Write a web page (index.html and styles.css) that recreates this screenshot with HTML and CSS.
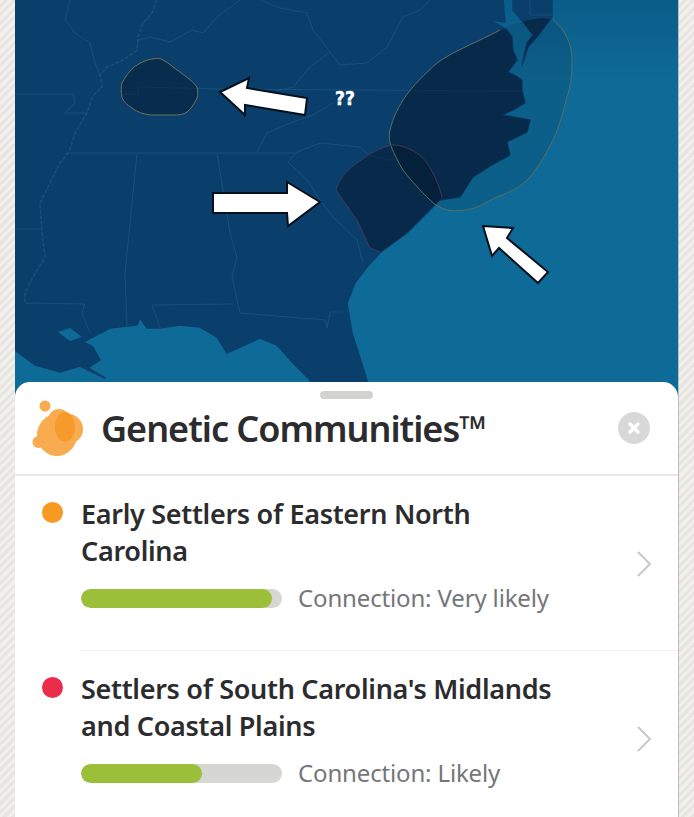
FILE: index.html
```html
<!DOCTYPE html>
<html lang="en">
<head>
<meta charset="utf-8">
<title>Genetic Communities</title>
<link rel="stylesheet" href="styles.css">
</head>
<body>
<main class="screen">
  <svg class="map" viewBox="15 0 663 400" aria-label="Map of the south-eastern United States">
    <defs>
      <linearGradient id="sea" x1="0" y1="0" x2="0" y2="1">
        <stop offset="0" stop-color="#0a5c88"/>
        <stop offset="0.2" stop-color="#0e6a97"/>
        <stop offset="1" stop-color="#0e6a97"/>
      </linearGradient>
      <clipPath id="landclip">
        <path d="M15,0 L503,0 L505,22 L490,20 L507,30 L512,37 L513,50 L517,60 L508,72 L516,76 L522,80 L522,90 L525,103 L513,110 L502,115 L530,120 L527,132 L507,142 L510,155 L490,166 L473,177 L460,197 L440,200 L420,220 L407,233 L380,253 L367,267 L355,283 L347,303 L352,333 L367,380 L367,400 L312,400 L310,380 L293,363 L277,345 L260,338 L227,353 L217,337 L200,327 L180,325 L160,328 L147,328 L140,318 L137,325 L110,328 L83,342 L93,347 L100,360 L88,368 L105,378 L80,366 L60,372 L35,365 L15,350 Z M513,0 L552,0 L552,17 L537,37 L528,47 L522,65 L527,43 L533,35 L523,22 L513,10 Z"/>
      </clipPath>
    </defs>
    <rect class="sea" x="15" y="0" width="663" height="400"/>
    <path class="blob-sea" d="M553,20 C566,30 572,45 572,60 C572,75 571,85 567,97 C562,115 560,125 553,140 C545,155 540,165 530,177 C520,188 510,192 497,197 C485,203 477,208 467,210 C458,211 452,211 447,210 C440,208 435,205 430,200 C420,190 412,182 403,170 C397,160 393,152 390,143 C389,138 389,134 390,130 C393,118 397,110 403,100 C413,85 425,74 437,63 C455,50 478,42 500,30 C518,22 540,15 553,20 Z"/>
    <path class="land" d="M15,0 L503,0 L505,22 L490,20 L507,30 L512,37 L513,50 L517,60 L508,72 L516,76 L522,80 L522,90 L525,103 L513,110 L502,115 L530,120 L527,132 L507,142 L510,155 L490,166 L473,177 L460,197 L440,200 L420,220 L407,233 L380,253 L367,267 L355,283 L347,303 L352,333 L367,380 L367,400 L312,400 L310,380 L293,363 L277,345 L260,338 L227,353 L217,337 L200,327 L180,325 L160,328 L147,328 L140,318 L137,325 L110,328 L83,342 L93,347 L100,360 L88,368 L105,378 L80,366 L60,372 L35,365 L15,350 Z M513,0 L552,0 L552,17 L537,37 L528,47 L522,65 L527,43 L533,35 L523,22 L513,10 Z"/>
    <path class="sea-fill" d="M58,332 L70,328 L82,337 L70,341 Z"/>
    <g class="borders">
      <polyline class="river" points="157,0 152,13 143,23 138,37 137,50 123,60 107,67 100,75 102,87 92,97 87,113 75,133 70,150 60,163 50,183 40,203 42,233 45,257 33,277 25,293 25,303"/>
      <polyline points="70,0 65,20 75,33 90,43 95,63 100,75"/>
      <polyline points="15,94 73,94 75,103 65,113 87,113"/>
      <polyline points="122,94 138,94 138,87 220,89 350,90 522,91"/>
      <polyline points="138,40 150,37 170,42 192,30 203,33 217,17 240,0"/>
      <polyline points="260,0 280,8 307,13 313,30 330,52 340,65 367,63 383,50 387,47 403,17 420,10 430,0"/>
      <polyline points="330,52 310,67 293,87 277,91"/>
      <polyline points="333,103 313,115 290,123 267,133 257,152"/>
      <polyline points="70,153 295,153"/>
      <polyline points="288,162 297,152 320,143 360,147 368,155 387,160 403,160 440,197"/>
      <polyline points="137,153 125,273 127,328"/>
      <polyline points="217,153 230,233 237,257 232,277 240,313 325,320 327,328 330,312 343,312"/>
      <polyline points="25,303 85,304 82,313 90,333"/>
      <polyline points="233,304 152,305 160,328"/>
      <polyline points="288,162 307,180 320,200 333,217 357,240 363,263"/>
      <polyline points="15,229 40,229"/>
      <polyline points="530,0 530,15 552,15"/>
    </g>
    <path class="blob-tn" d="M152,59 C157,58 160,58 163,60 C170,64 174,68 180,72 C186,77 193,81 197,87 C198,91 198,95 197,98 C194,104 191,109 187,112 C183,115 178,115 173,115 L150,115 C143,114 137,112 132,108 C127,105 123,101 122,97 C121,92 121,87 122,83 C125,77 129,72 133,68 C139,63 146,60 152,59 Z"/>
    <g class="land-clip">
      <path class="blob-land" d="M553,20 C566,30 572,45 572,60 C572,75 571,85 567,97 C562,115 560,125 553,140 C545,155 540,165 530,177 C520,188 510,192 497,197 C485,203 477,208 467,210 C458,211 452,211 447,210 C440,208 435,205 430,200 C420,190 412,182 403,170 C397,160 393,152 390,143 C389,138 389,134 390,130 C393,118 397,110 403,100 C413,85 425,74 437,63 C455,50 478,42 500,30 C518,22 540,15 553,20 Z"/>
      <path class="blob-land" d="M393,145 C402,145 410,149 417,153 C424,158 429,165 433,173 C437,181 440,189 442,197 L420,220 L407,233 L380,252 L370,248 L357,220 L336,190 C340,178 347,170 357,163 C368,155 380,147 393,145 Z"/>
    </g>
    <path class="blob-line-tan" d="M553,20 C566,30 572,45 572,60 C572,75 571,85 567,97 C562,115 560,125 553,140 C545,155 540,165 530,177 C520,188 510,192 497,197 C485,203 477,208 467,210 C458,211 452,211 447,210 C440,208 435,205 430,200 C420,190 412,182 403,170 C397,160 393,152 390,143 C389,138 389,134 390,130 C393,118 397,110 403,100 C413,85 425,74 437,63 C455,50 478,42 500,30"/>
    <path class="blob-line-red" d="M336,190 C340,178 347,170 357,163 C368,155 380,147 393,145 C402,145 410,149 417,153 C424,158 429,165 433,173 C437,181 440,189 442,197 M380,252 L370,248 L357,220 L336,190"/>
    <polygon class="arrow" points="220,92 249,78 247,88 307,98 305,115 245,105 245,115"/>
    <polygon class="arrow" points="213,193 287,193 287,182 320,202 288,226 287,213 213,213"/>
    <polygon class="arrow" points="483,226 513,228 507,238 548,272 538,283 499,248 492,256"/>
    <text class="marks" x="335" y="105">??</text>
  </svg>

  <section class="sheet">
    <div class="handle"></div>
    <header class="sheet-head">
      <svg class="logo" viewBox="0 0 54 60" aria-hidden="true">
        <circle class="bub" cx="13" cy="6" r="5.5"/>
        <circle class="bub" cx="6.500" cy="42" r="6"/>
        <ellipse class="bub" cx="25" cy="35" rx="20" ry="21"/>
        <circle class="bub" cx="27" cy="20" r="11"/>
        <circle class="bub" cx="36" cy="29" r="15"/>
        <ellipse class="bub-dark" cx="33" cy="27" rx="10" ry="15"/>
      </svg>
      <h1 class="sheet-title">Genetic Communities™</h1>
      <svg class="close" viewBox="0 0 32 32" aria-label="Close">
        <circle class="close-bg" cx="16" cy="16" r="16"/>
        <path class="close-x" d="M12,12 L20,20 M20,12 L12,20"/>
      </svg>
    </header>

    <article class="row">
      <span class="dot dot-orange"></span>
      <div class="row-body">
        <div class="row-text">
          <h2 class="row-title">Early Settlers of Eastern North<br>Carolina</h2>
          <div class="meta">
            <div class="bar"><div class="fill" style="width:95%"></div></div>
            <span class="meta-label">Connection: Very likely</span>
          </div>
        </div>
        <svg class="chev" viewBox="0 0 16 26" aria-hidden="true"><path d="M2,1 L14,13 L2,25"/></svg>
      </div>
    </article>

    <article class="row">
      <span class="dot dot-red"></span>
      <div class="row-body">
        <div class="row-text">
          <h2 class="row-title">Settlers of South Carolina's Midlands<br>and Coastal Plains</h2>
          <div class="meta">
            <div class="bar"><div class="fill" style="width:60%"></div></div>
            <span class="meta-label">Connection: Likely</span>
          </div>
        </div>
        <svg class="chev" viewBox="0 0 16 26" aria-hidden="true"><path d="M2,1 L14,13 L2,25"/></svg>
      </div>
    </article>
  </section>
</main>
</body>
</html>
```
FILE: styles.css
```css
* { box-sizing: border-box; }

html, body {
  margin: 0;
  height: 817px;
  overflow: hidden;
}

body {
  font-family: "Noto Sans", "Open Sans", sans-serif;
  background: repeating-linear-gradient(135deg, #f1f0ec 0 3px, #e6e5e0 3px 6px);
}

.screen {
  width: 663px;
  margin-left: 15px;
  background: #0e6a97;
  border-right: 1px solid #bdbdbd;
  box-sizing: content-box;
}

.map {
  display: block;
  width: 663px;
  height: 400px;
}

.sea { fill: url(#sea); }
.sea-fill { fill: #0e6a97; }
.land {
  fill: #0b3f6b;
  stroke: #0b3f6b;
  stroke-width: 1.500;
  stroke-linejoin: round;
}

.borders polyline {
  fill: none;
  stroke: #215e88;
  stroke-width: 1;
  stroke-linejoin: round;
  opacity: 0.55;
}

.borders .river {
  stroke-dasharray: 4 1.500;
  stroke-width: 1.500;
}

.blob-sea { fill: rgba(5, 40, 70, 0.16); }
.blob-tn {
  fill: rgba(5, 25, 45, 0.48);
  stroke: #6e7258;
  stroke-width: 1;
}
.land-clip { clip-path: url(#landclip); }
.blob-land { fill: rgba(4, 22, 42, 0.5); }
.blob-line-tan { fill: none; stroke: #5a6e62; stroke-width: 1; }
.blob-line-red { fill: none; stroke: #3f3a52; stroke-width: 1; }

.arrow {
  fill: #fff;
  stroke: #05101c;
  stroke-width: 2;
  stroke-linejoin: miter;
}

.marks {
  font-family: "DejaVu Sans Condensed", "DejaVu Sans", sans-serif;
  font-weight: 700;
  font-size: 19px;
  fill: #fff;
  stroke: #fff;
  stroke-width: 0.4;
}

.sheet {
  position: relative;
  margin-top: -18px;
  height: 443px;
  background: #fff;
  border-radius: 15px 15px 0 0;
  overflow: hidden;
}

.handle {
  position: absolute;
  top: 9px;
  left: 305px;
  width: 53px;
  height: 8px;
  border-radius: 4px;
  background: #d2d2d0;
}

.sheet-head {
  display: flex;
  align-items: center;
  height: 94px;
  padding: 0 28px 0 17px;
  border-bottom: 2px solid #e8e8e8;
}

.logo {
  width: 54px;
  height: 60px;
  flex: none;
  margin-top: 3px;
}

.bub { fill: #f9ab4f; }
.bub-dark { fill: #f59a2b; }

.sheet-title {
  flex: 1;
  margin: 2px 0 0 15px;
  font-size: 36px;
  line-height: 1;
  font-weight: 600;
  color: #2c2c2e;
  letter-spacing: -1.020px;
}

.close { width: 32px; height: 32px; flex: none; }
.close-bg { fill: #d8d8d8; }
.close-x { stroke: #fff; stroke-width: 3.500; stroke-linecap: round; fill: none; }

.row { display: flex; align-items: flex-start; }

.dot {
  flex: none;
  width: 21px;
  height: 21px;
  margin: 26px 18px 0 27px;
  border-radius: 50%;
}
.dot-orange { background: #f79a23; }
.dot-red { background: #ea2c4a; }

.row-body {
  flex: 1;
  display: flex;
  align-items: center;
  justify-content: space-between;
  padding: 19px 26px 35px 0;
  border-bottom: 1px solid #f0f0f0;
}

.row-title {
  margin: 0;
  font-size: 27px;
  line-height: 37px;
  font-weight: 600;
  color: #2c2c2e;
  letter-spacing: -0.3px;
}

.meta {
  display: flex;
  align-items: center;
  gap: 16px;
  margin-top: 12px;
  height: 34px;
}

.bar {
  width: 201px;
  height: 19px;
  border-radius: 10px;
  background: #d6d6d2;
  overflow: hidden;
}

.fill {
  height: 100%;
  border-radius: 10px;
  background: #9cbf3a;
}

.meta-label {
  font-size: 24px;
  line-height: 32px;
  color: #74767a;
  letter-spacing: -0.15px;
}

.chev { width: 16px; height: 26px; flex: none; margin-top: 18px; }
.chev path { fill: none; stroke: #c8c8c8; stroke-width: 2; }
```
